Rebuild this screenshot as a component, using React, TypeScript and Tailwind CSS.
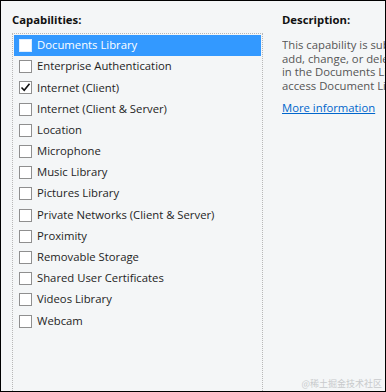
import React from 'react';

const items = [
  { label: 'Documents Library', checked: false },
  { label: 'Enterprise Authentication', checked: false },
  { label: 'Internet (Client)', checked: true },
  { label: 'Internet (Client & Server)', checked: false },
  { label: 'Location', checked: false },
  { label: 'Microphone', checked: false },
  { label: 'Music Library', checked: false },
  { label: 'Pictures Library', checked: false },
  { label: 'Private Networks (Client & Server)', checked: false },
  { label: 'Proximity', checked: false },
  { label: 'Removable Storage', checked: false },
  { label: 'Shared User Certificates', checked: false },
  { label: 'Videos Library', checked: false },
  { label: 'Webcam', checked: false },
];

function Box({ checked, selected }: { checked: boolean; selected: boolean }) {
  return (
    <span
      className={`w-[13px] h-[13px] border flex items-center justify-center shrink-0 ${
        selected ? 'bg-white border-[#dfeefe]' : 'bg-white border-[#8f8f8f]'
      }`}
    >
      {checked && (
        <svg width="11" height="11" viewBox="0 0 11 11">
          <path d="M1.5 5.5 L4.2 8.2 L9.5 1.8" fill="none" stroke="#111" strokeWidth="1.6" />
        </svg>
      )}
    </span>
  );
}

export default function App() {
  return (
    <div
      className="relative w-[386px] h-[392px] border border-black bg-[#f4f6f7] flex overflow-hidden text-[11.3px] text-[#1e1e1e]"
      style={{ fontFamily: '"Open Sans", "Noto Sans", sans-serif' }}
    >
      <div className="w-[262px] pl-[11px] flex flex-col shrink-0">
        <div className="h-[32px] pt-[6px] flex items-center font-bold text-[#111]">Capabilities:</div>
        <div className="flex-1 border-l border-t border-r border-dotted border-[#b8b8b8] pt-[1px] px-[1px]">
          {items.map((it, i) => (
            <div
              key={it.label}
              className={`h-[21.2px] flex items-center gap-[5px] pl-[5px] ${
                i === 0 ? 'bg-[#3399ff] text-white' : ''
              }`}
            >
              <Box checked={it.checked} selected={i === 0} />
              <span className="whitespace-nowrap">{it.label}</span>
            </div>
          ))}
        </div>
      </div>
      <div className="flex-1 pl-[19px] flex flex-col overflow-hidden">
        <div className="h-[32px] pt-[6px] flex items-center font-bold text-[#111]">Description:</div>
        <div className="text-[#555] leading-[13.5px] whitespace-nowrap pt-[5px] overflow-hidden">
          <div>This capability is subject to review. Apps can</div>
          <div>add, change, or delete files and folders</div>
          <div>in the Documents Library and</div>
          <div>access Document Library content.</div>
        </div>
        <div className="mt-[8px] text-[#0066cc] underline whitespace-nowrap">More information</div>
      </div>
      <div
        className="absolute right-[3px] bottom-[1px] text-[9px] text-[#c8cacc]"
        style={{ fontFamily: '"Noto Sans CJK SC", sans-serif' }}
      >
        @稀土掘金技术社区
      </div>
    </div>
  );
}
